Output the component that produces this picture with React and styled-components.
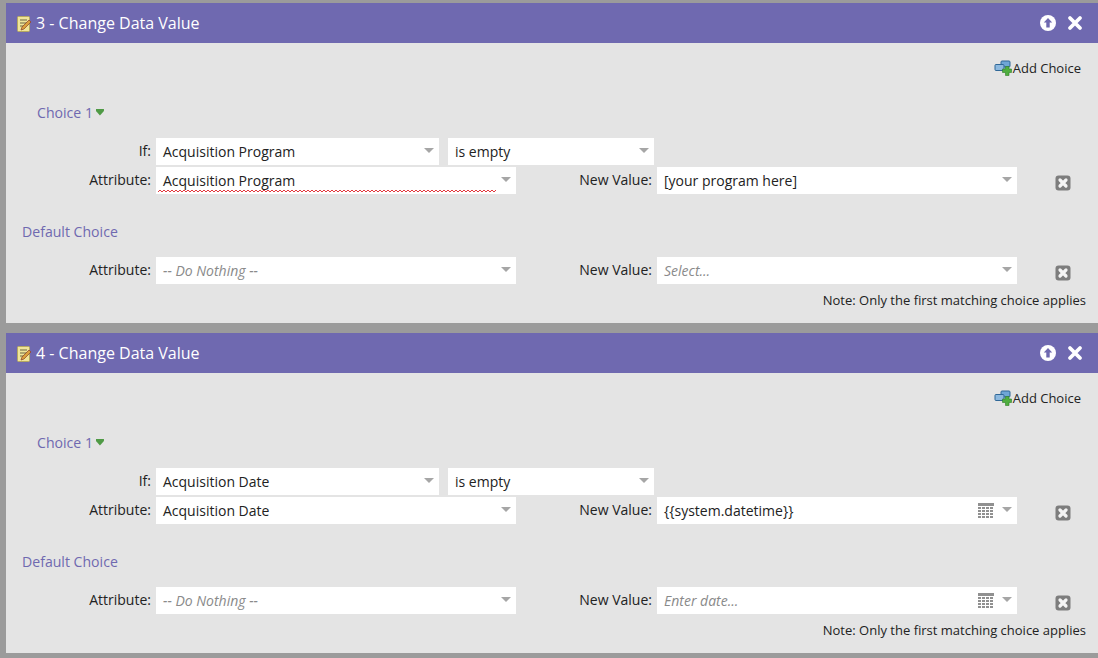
import React from 'react'
import styled, { createGlobalStyle } from 'styled-components'

const GlobalStyle = createGlobalStyle`
  html, body {
    margin: 0;
    padding: 0;
    background: #9b9b9b;
  }
  body {
    font-family: "Open Sans", "Liberation Sans", sans-serif;
    color: #222;
  }
`

const Page = styled.div`
  width: 1098px;
  height: 658px;
  overflow: hidden;
  box-sizing: border-box;
  padding: 3px 0 0 6px;
  display: flex;
  flex-direction: column;
  gap: 10px;
`
const Card = styled.section`
  height: 320px;
  display: flex;
  flex-direction: column;
  background: #e4e4e4;
`
const Header = styled.header`
  height: 40px;
  flex: none;
  display: flex;
  align-items: center;
  background: #6f69b0;
  color: #fff;
  padding: 0 15px 0 11px;
`
const Title = styled.h2`
  flex: 1;
  margin: 0 0 0 4px;
  font-size: 16px;
  font-weight: 400;
  line-height: 40px;
`
const HeaderActions = styled.div`
  display: flex;
  align-items: center;
  gap: 11px;
`
const Body = styled.div`
  flex: 1;
  display: flex;
  flex-direction: column;
`
const AddRow = styled.div`
  display: flex;
  justify-content: flex-end;
  align-items: center;
  gap: 1px;
  height: 20px;
  margin-top: 15px;
  padding-right: 17px;
  font-size: 13px;
`
const SectionTitle = styled.div`
  display: flex;
  align-items: center;
  gap: 3px;
  height: 20px;
  color: #6f69b0;
  font-size: 14.1px;
  margin-left: ${p => p.$indent}px;
  margin-top: ${p => p.$top}px;
`
const Caret = styled.span`
  width: 8px;
  height: 7px;
  background: #4f9a45;
  clip-path: polygon(0 0, 100% 0, 100% 35%, 50% 100%, 0 35%);
`
const Row = styled.div`
  display: flex;
  align-items: flex-start;
  height: 27px;
  margin-top: ${p => p.$top || 0}px;
`
const Label = styled.label`
  flex: none;
  width: ${p => p.$width}px;
  padding-right: ${p => p.$pad}px;
  box-sizing: border-box;
  text-align: right;
  font-size: 14px;
  line-height: 25px;
`
const Select = styled.div`
  flex: none;
  display: flex;
  align-items: center;
  position: relative;
  box-sizing: border-box;
  width: ${p => p.$width}px;
  height: 27px;
  margin-left: ${p => p.$gap || 0}px;
  padding: 0 5px 0 7px;
  background: #fff;
  font-size: 14px;
  color: ${p => (p.$placeholder ? '#8a8a8a' : '#222')};
  font-style: ${p => (p.$placeholder ? 'italic' : 'normal')};
`
const SelectText = styled.span`
  flex: 1;
  white-space: nowrap;
`
const Arrow = styled.span`
  flex: none;
  width: 0;
  height: 0;
  margin: 0 0 3px 8px;
  border-left: 5px solid transparent;
  border-right: 5px solid transparent;
  border-top: 5px solid #a6a6a6;
`
const Squiggle = styled.svg`
  position: absolute;
  left: 2px;
  bottom: 1px;
`
const RemoveButton = styled.span`
  flex: none;
  display: flex;
  margin: 8px 0 0 38px;
`
const Note = styled.div`
  text-align: right;
  font-size: 13px;
  line-height: 20px;
  margin-top: 6px;
  padding-right: 12px;
`

const NotesIcon = () => (
  <svg width="15" height="17" viewBox="0 0 15 17">
    <rect x="0.5" y="1.5" width="12" height="15" rx="1" fill="#f0e59a" stroke="#b5a860" />
    <path d="M3 5h7M3 8h7M3 11h4" stroke="#6b6440" strokeWidth="1" />
    <path d="M4 15l1-3 7-7 2 2-7 7z" fill="#d9a13c" stroke="#8a3b2a" strokeWidth="0.7" />
  </svg>
)

const UpIcon = () => (
  <svg width="16" height="16" viewBox="0 0 16 16">
    <circle cx="8" cy="8" r="8" fill="#fff" />
    <path d="M8 3l4.2 4.6H9.7V12.500H6.300V7.600H3.800z" fill="#6f69b0" />
  </svg>
)

const CloseIcon = () => (
  <svg width="16" height="16" viewBox="0 0 16 16">
    <path d="M3 3l10 10M13 3L3 13" stroke="#fff" strokeWidth="3.800" strokeLinecap="round" />
  </svg>
)

const AddChoiceIcon = () => (
  <svg width="18" height="16" viewBox="0 0 18 16">
    <rect x="7" y="1" width="9" height="6" rx="1" fill="#6fa6d6" stroke="#2f6797" />
    <rect x="1" y="4.500" width="9" height="6" rx="1" fill="#8db9df" stroke="#2f6797" />
    <path d="M11.500 6.500h3.500v2.500h2.500v3.500H15V15.500h-3.500v-3H8.500V9h3z" fill="#4fae3f" stroke="#2e7d27" strokeWidth="0.600" />
  </svg>
)

const RemoveIcon = () => (
  <svg width="16" height="16" viewBox="0 0 16 16">
    <rect x="0.500" y="0.500" width="15" height="15" rx="3" fill="#7d7d7d" />
    <path d="M5 5l6 6M11 5l-6 6" stroke="#f4f4f4" strokeWidth="3.200" strokeLinecap="round" />
  </svg>
)

const CalendarIcon = () => (
  <svg width="16" height="15" viewBox="0 0 16 15">
    <rect width="16" height="3" fill="#909090" />
    {[4, 7, 10, 13].map(y =>
      [0, 4, 8, 12].map(x => (
        <rect key={`${x}-${y}`} x={x} y={y} width="3" height="2" fill="#909090" />
      ))
    )}
  </svg>
)

const SpellCheck = () => {
  const points = []
  for (let x = 0; x <= 338; x += 2) points.push(`${x},${x % 4 === 0 ? 3 : 1}`)
  return (
    <Squiggle width="340" height="4">
      <polyline points={points.join(' ')} fill="none" stroke="#e2383e" strokeWidth="1" />
    </Squiggle>
  )
}

const Field = ({ width, gap, text, placeholder, calendar }) => (
  <Select $width={width} $gap={gap} $placeholder={placeholder}>
    <SelectText>{text}</SelectText>
    {calendar && <CalendarIcon />}
    <Arrow />
  </Select>
)

const AttributeRow = ({ top, attribute, value, placeholder, attributePlaceholder, calendar, misspelled }) => (
  <Row $top={top}>
    <Label $width={146} $pad={1}>Attribute:</Label>
    <Select $width={360} $gap={4} $placeholder={attributePlaceholder}>
      <SelectText>{attribute}</SelectText>
      <Arrow />
      {misspelled && <SpellCheck />}
    </Select>
    <Label $width={141} $pad={5}>New Value:</Label>
    <Field width={360} text={value} placeholder={placeholder} calendar={calendar} />
    <RemoveButton><RemoveIcon /></RemoveButton>
  </Row>
)

const cards = [
  {
    title: '3 - Change Data Value',
    attribute: 'Acquisition Program',
    value: '[your program here]',
    defaultValue: 'Select...',
    calendar: false,
    misspelled: true,
  },
  {
    title: '4 - Change Data Value',
    attribute: 'Acquisition Date',
    value: '{{system.datetime}}',
    defaultValue: 'Enter date...',
    calendar: true,
    misspelled: false,
  },
]

const ChangeCard = ({ title, attribute, value, defaultValue, calendar, misspelled }) => (
  <Card>
    <Header>
      <NotesIcon />
      <Title>{title}</Title>
      <HeaderActions>
        <UpIcon />
        <CloseIcon />
      </HeaderActions>
    </Header>
    <Body>
      <AddRow>
        <AddChoiceIcon />
        Add Choice
      </AddRow>
      <SectionTitle $indent={31} $top={24}>
        Choice 1 <Caret />
      </SectionTitle>
      <Row $top={16}>
        <Label $width={146} $pad={1}>If:</Label>
        <Field width={283} gap={4} text={attribute} />
        <Field width={206} gap={9} text="is empty" />
      </Row>
      <AttributeRow top={2} attribute={attribute} value={value} calendar={calendar} misspelled={misspelled} />
      <SectionTitle $indent={16} $top={27}>Default Choice</SectionTitle>
      <AttributeRow
        top={16}
        attribute="-- Do Nothing --"
        attributePlaceholder
        value={defaultValue}
        placeholder
        calendar={calendar}
      />
      <Note>Note: Only the first matching choice applies</Note>
    </Body>
  </Card>
)

const App = () => (
  <Page>
    <GlobalStyle />
    {cards.map(card => (
      <ChangeCard key={card.title} {...card} />
    ))}
  </Page>
)

export default App
